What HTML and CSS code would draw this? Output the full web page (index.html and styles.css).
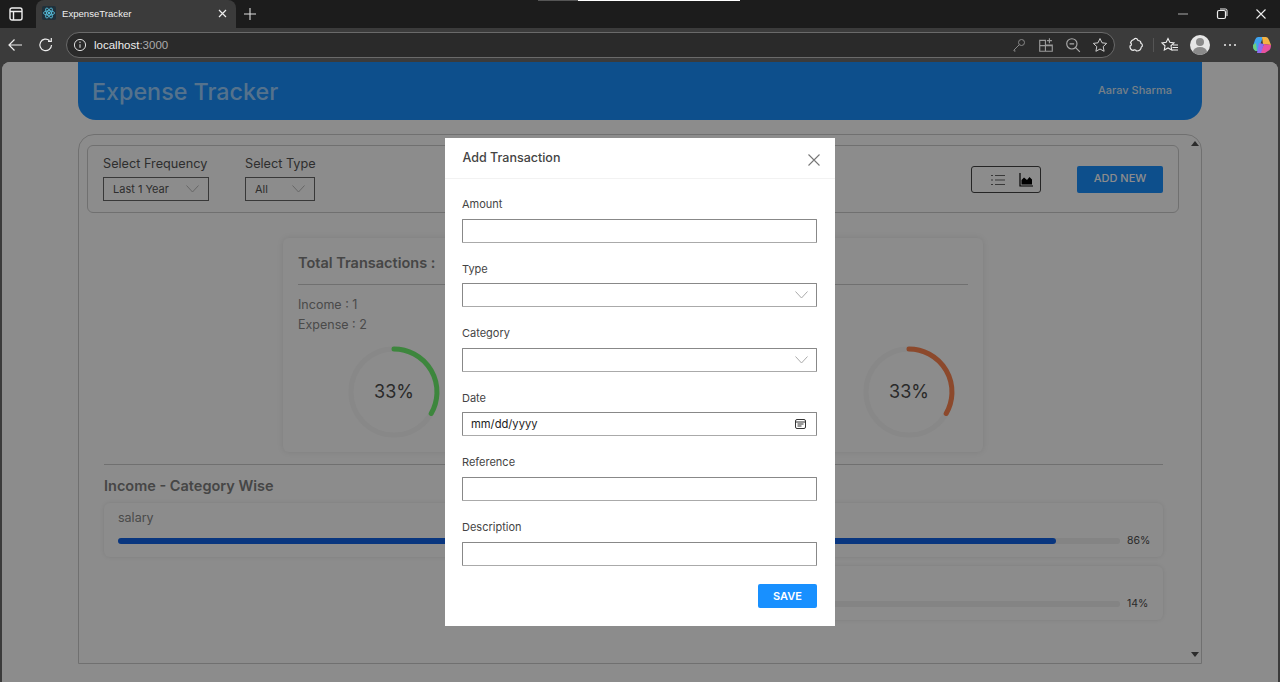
FILE: index.html
```html
<!DOCTYPE html>
<html lang="en">
<head>
  <meta charset="UTF-8">
  <title>ExpenseTracker</title>
  <link rel="stylesheet" href="styles.css">
</head>
<body>
  <div class="tabbar">
    <svg class="win-icon" width="14" height="14" viewBox="0 0 14 14"><rect x="1" y="1" width="12" height="12" rx="2" fill="none" stroke="#eee" stroke-width="1.4"/><path d="M1 4.500h12M4.500 4.500V13" stroke="#eee" stroke-width="1.400" fill="none"/></svg>
    <div class="tab">
      <svg class="react-icon" width="14" height="14" viewBox="0 0 16 16"><rect width="16" height="16" rx="2" fill="#20303a"/><g fill="none" stroke="#61dafb" stroke-width=".8"><ellipse cx="8" cy="8" rx="6.400" ry="2.500"/><ellipse cx="8" cy="8" rx="6.400" ry="2.500" transform="rotate(60 8 8)"/><ellipse cx="8" cy="8" rx="6.400" ry="2.500" transform="rotate(120 8 8)"/></g><circle cx="8" cy="8" r="1.200" fill="#61dafb"/></svg>
      <span class="tab-title">ExpenseTracker</span>
      <svg class="tab-close" width="9" height="9" viewBox="0 0 9 9"><path d="M1 1l7 7M8 1L1 8" stroke="#eee" stroke-width="1.200"/></svg>
    </div>
    <svg class="new-tab" width="14" height="14" viewBox="0 0 14 14"><path d="M7 1v12M1 7h12" stroke="#ddd" stroke-width="1.100"/></svg>
    <div class="capture-bar"><span class="capture-dark"></span><span class="capture-light"></span></div>
    <div class="win-controls">
      <svg width="12" height="12" viewBox="0 0 12 12"><path d="M1 6h10" stroke="#aaa" stroke-width="1"/></svg>
      <svg width="12" height="12" viewBox="0 0 12 12"><rect x="1.500" y="2.500" width="8" height="8" rx="1.500" fill="none" stroke="#eee" stroke-width="1.200"/><path d="M4 1h5.500A1.500 1.500 0 0 1 11 2.500V8" fill="none" stroke="#eee" stroke-width="1"/></svg>
      <svg width="12" height="12" viewBox="0 0 12 12"><path d="M1.500 1.500l9 9M10.500 1.500l-9 9" stroke="#eee" stroke-width="1.100"/></svg>
    </div>
  </div>

  <div class="toolbar">
    <svg class="tool-btn" width="16" height="16" viewBox="0 0 16 16"><path d="M15 8H2M7.500 2.500L2 8l5.500 5.500" fill="none" stroke="#eee" stroke-width="1.200"/></svg>
    <svg class="tool-btn reload" width="16" height="16" viewBox="0 0 16 16"><path d="M13.500 8A5.800 5.800 0 1 1 11.500 3.500M13.300 1v3.300H10" fill="none" stroke="#eee" stroke-width="1.200"/></svg>
    <div class="address">
      <svg width="14" height="14" viewBox="0 0 14 14"><circle cx="7" cy="7" r="5.600" fill="none" stroke="#ddd" stroke-width="1"/><path d="M7 6.200v3.600" stroke="#ddd" stroke-width="1.100"/><circle cx="7" cy="4.300" r=".7" fill="#ddd"/></svg>
      <span class="url">localhost<span class="url-port">:3000</span></span>
      <div class="address-icons">
        <svg width="16" height="16" viewBox="-1 -1 16 16"><circle cx="9.500" cy="4.500" r="3" fill="none" stroke="#888" stroke-width="1"/><path d="M7.300 6.700L2 12v1h1.500" fill="none" stroke="#888" stroke-width="1"/></svg>
        <svg width="16" height="16" viewBox="0 0 14 14"><path d="M1.500 3h5v9.500h-5zM6.500 7h6v5.500h-6zM1.500 7.500h11M10 1v4.500M7.800 3.200h4.400" fill="none" stroke="#999" stroke-width="1"/></svg>
        <svg width="16" height="16" viewBox="0 0 14 14"><circle cx="6" cy="6" r="4.500" fill="none" stroke="#aaa" stroke-width="1"/><path d="M9.300 9.300l3.700 3.700M4 6h4" stroke="#aaa" stroke-width="1"/></svg>
        <svg width="16" height="16" viewBox="0 0 16 16"><path d="M8 1.500l2 4.300 4.700.6-3.500 3.200.9 4.700L8 12l-4.100 2.300.9-4.700L1.300 6.400 6 5.800z" fill="none" stroke="#ccc" stroke-width="1"/></svg>
      </div>
    </div>
    <div class="tool-right">
      <svg class="ti-ext" width="16" height="16" viewBox="0 0 16 16"><path d="M6 2.500C6 1 9 1 9.500 2.500L10 3.500C12 3.500 13 5 13 6.500C14.500 6.500 15 9.500 13.300 10C13 12.500 11 14 8.500 14C8 12.500 5.500 12.500 5.200 13.500C3 13 1.800 11 2 8.800C3.500 9 4 6.500 2.500 6C3 4 4.500 2.800 6 2.500Z" fill="none" stroke="#eee" stroke-width="1.200" stroke-linejoin="round"/></svg>
      <span class="tool-sep"></span>
      <svg class="ti-fav" width="18" height="16" viewBox="0 0 18 16"><path d="M7 1.500l1.800 3.800 4.200.6-3 2.900.7 4.200L7 11l-3.700 2 .7-4.200-3-2.900 4.200-.6zM12 8h5M11.500 10.500h5.500M10.500 13h6.500" fill="none" stroke="#eee" stroke-width="1.100"/></svg>
      <div class="avatar"><span class="avatar-head"></span><span class="avatar-body"></span></div>
      <svg class="ti-more" width="14" height="14" viewBox="0 0 14 14"><circle cx="2" cy="7" r="1" fill="#eee"/><circle cx="7" cy="7" r="1" fill="#eee"/><circle cx="12" cy="7" r="1" fill="#eee"/></svg>
      <svg class="ti-copilot" width="20" height="20" viewBox="0 0 20 20"><path d="M6 2h5L8 10l-2 6H4q-3-1-3-5l2-6q1-3 3-3z" fill="#3fa3ef"/><path d="M10 2h4q2 0 3 3l2 5-8-1z" fill="#f3b244"/><path d="M12 9l7 1q0 5-3 6l-3 2H8z" fill="#e8529f"/><path d="M7 8l5 1-3 9H5z" fill="#8e6cf0"/><path d="M1 10l3-2 1 8q-4 0-4-6z" fill="#6ed07c"/></svg>
    </div>
  </div>

  <div class="viewport">
    <header class="app-header">
      <h1 class="logo">Expense Tracker</h1>
      <span class="user-name">Aarav Sharma</span>
    </header>

    <main class="content">
      <section class="filters">
        <div class="filter">
          <label class="filter-label">Select Frequency</label>
          <div class="select select-freq">Last 1 Year<svg width="13" height="8" viewBox="0 0 13 8"><path d="M.5.500l6 6.500 6-6.500" fill="none" stroke="#bbb" stroke-width="1"/></svg></div>
        </div>
        <div class="filter">
          <label class="filter-label">Select Type</label>
          <div class="select select-type">All<svg width="13" height="8" viewBox="0 0 13 8"><path d="M.5.500l6 6.500 6-6.500" fill="none" stroke="#bbb" stroke-width="1"/></svg></div>
        </div>
        <div class="view-switch">
          <svg width="14" height="12" viewBox="0 0 14 12"><path d="M4 1.500h10M4 6h10M4 10.500h10M0 1.500h2M0 6h2M0 10.500h2" stroke="#666" stroke-width="1"/></svg>
          <svg width="14" height="14" viewBox="0 0 14 14"><path d="M1 0v13h13" fill="none" stroke="#000" stroke-width="1.200"/><path d="M2.500 11.500V7L5 4.500 8 7l2.500-3 2.500 2.500v5z" fill="#000"/></svg>
        </div>
        <button class="btn-add">ADD NEW</button>
      </section>

      <section class="stat-card">
        <div class="stat-half">
          <h3 class="stat-title">Total Transactions :</h3>
          <p class="stat-line">Income : 1</p>
          <p class="stat-line">Expense : 2</p>
          <svg class="ring" width="96" height="96" viewBox="0 0 96 96">
            <circle cx="48" cy="48" r="43" fill="none" stroke="#f7f7f7" stroke-width="5"/>
            <path d="M48 5A43 43 0 0 1 85.200 69.500" fill="none" stroke="#70f570" stroke-width="5" stroke-linecap="round"/>
            <text x="48" y="54" text-anchor="middle" class="ring-text">33%</text>
          </svg>
        </div>
        <div class="stat-half stat-right">
          <svg class="ring" width="96" height="96" viewBox="0 0 96 96">
            <circle cx="48" cy="48" r="43" fill="none" stroke="#f7f7f7" stroke-width="5"/>
            <path d="M48 5A43 43 0 0 1 85.200 69.500" fill="none" stroke="#ff8550" stroke-width="5" stroke-linecap="round"/>
            <text x="48" y="54" text-anchor="middle" class="ring-text">33%</text>
          </svg>
        </div>
      </section>

      <section class="categories">
        <h3 class="cat-title">Income - Category Wise</h3>
        <div class="cat-card">
          <span class="cat-name">salary</span>
          <div class="cat-row">
            <div class="track"><div class="fill" style="width: 93.6%"></div></div>
            <span class="cat-pct">86%</span>
          </div>
        </div>
        <div class="cat-card cat-card-short">
          <span class="cat-name">&nbsp;</span>
          <div class="cat-row">
            <div class="track"></div>
            <span class="cat-pct">14%</span>
          </div>
        </div>
      </section>

      <div class="scroll-arrows">
        <span class="arrow-up"></span>
        <span class="arrow-down"></span>
      </div>
    </main>

    <div class="mask">
      <div class="modal">
        <div class="modal-head">
          <span class="modal-title">Add Transaction</span>
          <svg width="12" height="12" viewBox="0 0 12 12"><path d="M.5.500l11 11M11.500.500l-11 11" stroke="#777" stroke-width="1.100"/></svg>
        </div>
        <form class="modal-body">
          <div class="field"><label>Amount</label><div class="input"></div></div>
          <div class="field"><label>Type</label><div class="input"><svg width="13" height="8" viewBox="0 0 13 8"><path d="M.5.500l6 6.500 6-6.500" fill="none" stroke="#aaa" stroke-width="1"/></svg></div></div>
          <div class="field"><label>Category</label><div class="input"><svg width="13" height="8" viewBox="0 0 13 8"><path d="M.5.500l6 6.500 6-6.500" fill="none" stroke="#aaa" stroke-width="1"/></svg></div></div>
          <div class="field"><label>Date</label><div class="input input-date"><span>mm/dd/yyyy</span><svg width="11" height="10" viewBox="0 0 11 10"><rect x=".5" y=".5" width="10" height="9" rx="1.500" fill="none" stroke="#333" stroke-width="1"/><path d="M.5 3h10M2.500 5h6M2.500 7h4" stroke="#333" stroke-width="1"/></svg></div></div>
          <div class="field"><label>Reference</label><div class="input"></div></div>
          <div class="field"><label>Description</label><div class="input"></div></div>
          <div class="modal-actions"><button type="button" class="btn-save">SAVE</button></div>
        </form>
      </div>
    </div>
  </div>
</body>
</html>
```

FILE: styles.css
```css
html, body {
  margin: 0;
  padding: 0;
  height: 100%;
  overflow: hidden;
  font-family: Inter, "Liberation Sans", sans-serif;
  background: #3b3b3b;
}
body {
  display: flex;
  flex-direction: column;
}

/* browser chrome */
.tabbar {
  height: 28px;
  background: #1c1c1c;
  display: flex;
  align-items: center;
  position: relative;
  flex: none;
}
.win-icon {
  margin: 0 0 1px 9px;
}
.tab {
  width: 200px;
  height: 28px;
  margin-left: 13px;
  box-sizing: border-box;
  padding: 0 9px 2px 6px;
  background: #3b3b3b;
  border-radius: 8px 8px 0 0;
  display: flex;
  align-items: center;
  color: #eee;
  font-family: "Liberation Sans", sans-serif;
  font-size: 9.600px;
}
.tab-title {
  margin-left: 6px;
  flex: 1;
}
.new-tab {
  margin: 0 0 1px 7px;
}
.capture-bar {
  position: absolute;
  top: 0;
  left: 538px;
  display: flex;
  height: 1px;
}
.capture-dark {
  width: 40px;
  background: #555;
}
.capture-light {
  width: 162px;
  background: #fff;
}
.win-controls {
  margin-left: auto;
  display: flex;
  gap: 27px;
  padding-right: 13px;
}
.toolbar {
  height: 34px;
  background: #3b3b3b;
  display: flex;
  align-items: center;
  flex: none;
}
.tool-btn {
  margin-left: 7px;
}
.reload {
  margin-left: 15px;
}
.address {
  width: 1049px;
  height: 26px;
  margin-left: 12px;
  box-sizing: border-box;
  padding: 0 6px 0 6px;
  background: #2a2a2a;
  border: 1px solid #6a6a6a;
  border-radius: 13px;
  display: flex;
  align-items: center;
  gap: 7px;
  color: #eee;
  font-family: "Liberation Sans", sans-serif;
  font-size: 11.500px;
}
.url-port {
  color: #aaa;
}
.address-icons {
  margin-left: auto;
  display: flex;
  align-items: center;
  gap: 11px;
}
.tool-right {
  display: flex;
  align-items: center;
}
.ti-ext {
  margin-left: 13px;
}
.tool-sep {
  width: 1px;
  height: 14px;
  margin-left: 9px;
  background: #555;
}
.ti-fav {
  margin-left: 7px;
}
.ti-more {
  margin-left: 13px;
}
.ti-copilot {
  margin-left: 15px;
}
.avatar {
  width: 20px;
  height: 20px;
  margin-left: 11px;
  border-radius: 50%;
  background: #e6e6e6;
  position: relative;
  overflow: hidden;
}
.avatar-head {
  position: absolute;
  left: 6px;
  top: 3px;
  width: 8px;
  height: 8px;
  border-radius: 50%;
  background: #8a8a8a;
}
.avatar-body {
  position: absolute;
  left: 3px;
  top: 12px;
  width: 14px;
  height: 10px;
  border-radius: 50%;
  background: #8a8a8a;
}

/* app */
.viewport {
  flex: 1;
  margin: 0 2px;
  background: #fff;
  border-radius: 8px 8px 0 0;
  position: relative;
  overflow: hidden;
  color: #555;
  display: flex;
  flex-direction: column;
  align-items: center;
}
.app-header {
  width: 1124px;
  height: 58px;
  flex: none;
  box-sizing: border-box;
  padding: 0 30px 0 14px;
  background: #1890ff;
  border-radius: 0 0 18px 18px;
  display: flex;
  justify-content: space-between;
  align-items: center;
  color: #d8e8f8;
}
.logo {
  margin: 0;
  font-size: 23.300px;
  font-weight: 500;
  color: #9cd0ff;
}
.user-name {
  font-size: 11px;
  font-weight: 500;
  margin-bottom: 2px;
}
.content {
  width: 1124px;
  height: 530px;
  margin-top: 14px;
  flex: none;
  box-sizing: border-box;
  padding: 10px 22px 0 8px;
  border: 1px solid #ccc;
  border-radius: 16px 16px 0 0;
  position: relative;
}
.filters {
  height: 68px;
  box-sizing: border-box;
  padding: 11px 15px 0;
  border: 1px solid #ccc;
  border-radius: 6px;
  display: flex;
  gap: 36px;
}
.filter {
  display: flex;
  flex-direction: column;
  gap: 6px;
}
.filter-label {
  font-size: 12.700px;
  line-height: 14px;
  white-space: nowrap;
}
.select {
  height: 24px;
  box-sizing: border-box;
  padding: 0 9px 0 9px;
  border: 1px solid #666;
  display: flex;
  align-items: center;
  justify-content: space-between;
  font-size: 11px;
}
.select-freq {
  width: 106px;
}
.select-type {
  width: 70px;
}
.view-switch {
  width: 70px;
  height: 27px;
  margin: 9px 0 0 auto;
  box-sizing: border-box;
  border: 1px solid #444;
  border-radius: 3px;
  display: flex;
  align-items: center;
  justify-content: flex-end;
  gap: 14px;
  padding-right: 7px;
}
.btn-add {
  width: 86px;
  height: 27px;
  margin-top: 9px;
  padding: 0 0 3px;
  background: #1890ff;
  border: 0;
  border-radius: 2px;
  color: #fff;
  font-family: inherit;
  font-size: 11px;
  font-weight: 500;
}
.stat-card {
  width: 700px;
  height: 214px;
  margin: 25px 0 0 196px;
  display: flex;
  box-sizing: border-box;
  padding: 0 15px;
  border-radius: 6px;
  box-shadow: 0 0 6px rgba(0,0,0,0.1);
}
.stat-half {
  flex: 1;
  min-width: 0;
  position: relative;
}
.stat-title {
  margin: 0;
  height: 47px;
  line-height: 50px;
  box-sizing: border-box;
  border-bottom: 1px solid #ccc;
  width: 670px;
  font-size: 14.500px;
  font-weight: 600;
  color: #808080;
}
.stat-line {
  margin: 15px 0 0;
  line-height: 10px;
  font-size: 12.500px;
  color: #888;
}
.stat-line + .stat-line {
  margin-top: 10px;
}
.ring {
  position: absolute;
  top: 106px;
  left: 48px;
}
.stat-right .ring {
  left: 228px;
}
.ring-text {
  font-size: 18px;
  fill: #4d4d4d;
}
.categories {
  margin: 12px 0 0 17px;
  width: 1059px;
  border-top: 1px solid #ccc;
}
.cat-title {
  margin: 12px 0 9px;
  font-size: 14.500px;
  line-height: 17px;
  font-weight: 600;
  color: #808080;
}
.cat-card {
  height: 54px;
  margin-bottom: 9px;
  box-sizing: border-box;
  padding: 7px 13px 0 14px;
  border-radius: 6px;
  box-shadow: 0 0 4px rgba(0,0,0,0.1);
}
.cat-card-short {
  margin-left: 400px;
}
.cat-name {
  display: block;
  font-size: 12.500px;
  line-height: 15px;
  color: #888;
}
.cat-row {
  display: flex;
  align-items: center;
  gap: 7px;
  margin-top: 9px;
}
.track {
  flex: 1;
  height: 6px;
  background: #f0f0f0;
  border-radius: 3px;
}
.fill {
  height: 6px;
  background: #1263e8;
  border-radius: 3px;
}
.cat-pct {
  font-size: 10.500px;
  width: 23px;
  color: #4d4d4d;
}
.scroll-arrows {
  position: absolute;
  right: 1px;
  top: 6px;
  bottom: 6px;
  width: 10px;
  display: flex;
  flex-direction: column;
  justify-content: space-between;
  align-items: center;
}
.arrow-up {
  border: 4px solid transparent;
  border-top: 0;
  border-bottom: 5px solid #505050;
}
.arrow-down {
  border: 4px solid transparent;
  border-bottom: 0;
  border-top: 5px solid #505050;
}

/* modal */
.mask {
  position: absolute;
  inset: 0;
  background: rgba(0,0,0,0.45);
  display: flex;
  justify-content: center;
  align-items: flex-start;
  padding-top: 76px;
}
.modal {
  width: 390px;
  height: 488px;
  background: #fff;
  display: flex;
  flex-direction: column;
}
.modal-head {
  height: 41px;
  flex: none;
  box-sizing: border-box;
  padding: 0 15px 0 17.500px;
  border-bottom: 1px solid #f2f2f2;
  display: flex;
  justify-content: space-between;
  align-items: center;
}
.modal-head svg {
  margin-top: 4px;
}
.modal-title {
  font-size: 12.500px;
  font-weight: 500;
  color: #444;
  margin-bottom: 2px;
}
.modal-body {
  padding: 18px 18px 0 17px;
  margin: 0;
}
.field + .field {
  margin-top: 19px;
}
.field label {
  display: block;
  font-size: 11px;
  line-height: 14px;
  color: #444;
  margin-bottom: 7.600px;
}
.input {
  height: 24px;
  box-sizing: border-box;
  border: 1px solid #888;
  border-bottom-color: #aaa;
  border-radius: 1px;
  display: flex;
  align-items: center;
  justify-content: flex-end;
  padding: 0 8px;
}
.input-date {
  justify-content: space-between;
  font-size: 11.200px;
  padding: 0 10px 0 8px;
  color: #222;
}
.modal-actions {
  display: flex;
  justify-content: flex-end;
  margin-top: 18px;
}
.btn-save {
  width: 59px;
  height: 24px;
  background: #1890ff;
  border: 0;
  border-radius: 2px;
  color: #fff;
  font-family: inherit;
  font-size: 11px;
  font-weight: 600;
}
```
